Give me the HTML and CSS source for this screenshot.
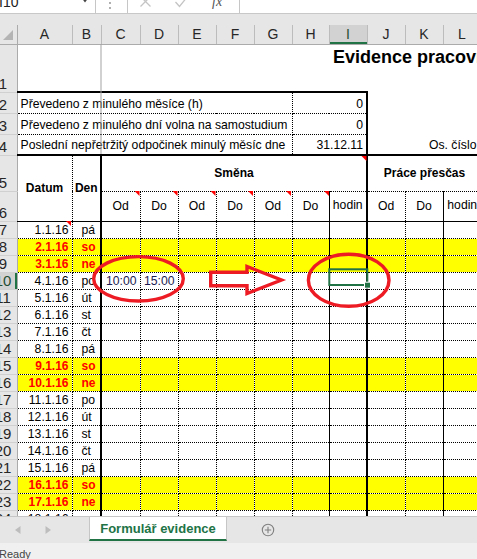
FILE: index.html
```html
<!DOCTYPE html>
<html lang="cs">
<head>
<meta charset="utf-8">
<title>Evidence pracovní doby</title>
<link rel="stylesheet" href="styles.css">
</head>
<body>
<div class="app">
  <div class="fbar">
    <div class="namebox">
      <span class="nb-text">I10</span>
      <svg class="nb-arrow" width="6" height="13" viewBox="0 0 6 13"><path d="M0 -1.5 L6 -1.5 L3 2.5 Z"/></svg>
    </div>
    <div class="fsep">
      <svg width="31" height="13" viewBox="0 0 31 13"><circle cx="14" cy="3" r="0.9"/><circle cx="14" cy="8" r="0.9"/></svg>
    </div>
    <div class="fbtns">
      <svg class="ico-x" width="11" height="13" viewBox="0 0 11 13"><path d="M0.5 -3.5 L10.5 6.5 M10.5 -3.5 L0.5 6.5"/></svg>
      <svg class="ico-ok" width="13" height="13" viewBox="0 0 13 13"><path d="M0.5 2 L4.5 6.5 L12.5 -3.5"/></svg>
      <span class="fx">fx</span>
    </div>
    <div class="finput"></div>
  </div>

  <div class="sheet">
    <div class="hgap"></div>
    <table class="grid">
      <colgroup>
        <col class="w-rh"><col class="w-a"><col class="w-b"><col class="w-c">
        <col class="w-n"><col class="w-n"><col class="w-n"><col class="w-n">
        <col class="w-h"><col class="w-n"><col class="w-n"><col class="w-n"><col class="w-n">
      </colgroup>
      <tr class="ch">
        <th class="corner"><svg width="17" height="18" viewBox="0 0 17 18"><polygon points="13,5 13,15 3,15"/></svg></th>
        <th>A</th><th>B</th><th>C</th><th>D</th><th>E</th><th>F</th><th>G</th><th>H</th><th class="sel">I</th><th>J</th><th>K</th><th>L</th>
      </tr>
      <tr class="r1">
        <th class="rh"><div class="rn">1</div></th>
        <td colspan="8"></td>
        <td colspan="4" class="title">Evidence pracovní doby</td>
      </tr>
      <tr class="r2 info first">
        <th class="rh"><div class="rn">2</div></th>
        <td colspan="7" class="lbl">Převedeno z minulého měsíce (h)</td>
        <td colspan="2" class="val">0</td>
        <td colspan="3" class="rest"></td>
      </tr>
      <tr class="r2 info">
        <th class="rh"><div class="rn">3</div></th>
        <td colspan="7" class="lbl">Převedeno z minulého dní volna na samostudium</td>
        <td colspan="2" class="val">0</td>
        <td colspan="3" class="rest"></td>
      </tr>
      <tr class="r2 info last">
        <th class="rh"><div class="rn">4</div></th>
        <td colspan="7" class="lbl">Poslední nepřetržitý odpočinek minulý měsíc dne</td>
        <td colspan="2" class="val">31.12.11</td>
        <td colspan="3" class="rest osc">Os. číslo</td>
      </tr>
      <tr class="r5">
        <th class="rh"><div class="rn">5</div></th>
        <td rowspan="2" class="hd hA">Datum</td>
        <td rowspan="2" class="hd hB">Den</td>
        <td colspan="7" class="hd hS">Směna</td>
        <td colspan="3" class="hd hP">Práce přesčas</td>
      </tr>
      <tr class="r6">
        <th class="rh"><div class="rn">6</div></th>
        <td class="sub bd">Od</td><td class="sub bd">Do</td><td class="sub bd">Od</td><td class="sub bd">Do</td>
        <td class="sub bd">Od</td><td class="sub bs">Do</td><td class="sub bt hod">hodin</td>
        <td class="sub bd">Od</td><td class="sub bs">Do</td><td class="sub hod">hodin</td>
      </tr>
      <tr class="dr"><th class="rh"><div class="rn">7</div></th><td class="dt">1.1.16</td><td class="dy">pá</td><td></td><td></td><td></td><td></td><td></td><td></td><td></td><td></td><td></td><td></td></tr>
      <tr class="dr we"><th class="rh"><div class="rn">8</div></th><td class="dt">2.1.16</td><td class="dy">so</td><td></td><td></td><td></td><td></td><td></td><td></td><td></td><td></td><td></td><td></td></tr>
      <tr class="dr we"><th class="rh"><div class="rn">9</div></th><td class="dt">3.1.16</td><td class="dy">ne</td><td></td><td></td><td></td><td></td><td></td><td></td><td></td><td></td><td></td><td></td></tr>
      <tr class="dr"><th class="rh sel"><div class="rn">10</div></th><td class="dt">4.1.16</td><td class="dy">po</td><td class="tm">10:00</td><td class="tm">15:00</td><td></td><td></td><td></td><td></td><td></td><td></td><td></td><td></td></tr>
      <tr class="dr"><th class="rh"><div class="rn">11</div></th><td class="dt">5.1.16</td><td class="dy">út</td><td></td><td></td><td></td><td></td><td></td><td></td><td></td><td></td><td></td><td></td></tr>
      <tr class="dr"><th class="rh"><div class="rn">12</div></th><td class="dt">6.1.16</td><td class="dy">st</td><td></td><td></td><td></td><td></td><td></td><td></td><td></td><td></td><td></td><td></td></tr>
      <tr class="dr"><th class="rh"><div class="rn">13</div></th><td class="dt">7.1.16</td><td class="dy">čt</td><td></td><td></td><td></td><td></td><td></td><td></td><td></td><td></td><td></td><td></td></tr>
      <tr class="dr"><th class="rh"><div class="rn">14</div></th><td class="dt">8.1.16</td><td class="dy">pá</td><td></td><td></td><td></td><td></td><td></td><td></td><td></td><td></td><td></td><td></td></tr>
      <tr class="dr we"><th class="rh"><div class="rn">15</div></th><td class="dt">9.1.16</td><td class="dy">so</td><td></td><td></td><td></td><td></td><td></td><td></td><td></td><td></td><td></td><td></td></tr>
      <tr class="dr we"><th class="rh"><div class="rn">16</div></th><td class="dt">10.1.16</td><td class="dy">ne</td><td></td><td></td><td></td><td></td><td></td><td></td><td></td><td></td><td></td><td></td></tr>
      <tr class="dr"><th class="rh"><div class="rn">17</div></th><td class="dt">11.1.16</td><td class="dy">po</td><td></td><td></td><td></td><td></td><td></td><td></td><td></td><td></td><td></td><td></td></tr>
      <tr class="dr"><th class="rh"><div class="rn">18</div></th><td class="dt">12.1.16</td><td class="dy">út</td><td></td><td></td><td></td><td></td><td></td><td></td><td></td><td></td><td></td><td></td></tr>
      <tr class="dr"><th class="rh"><div class="rn">19</div></th><td class="dt">13.1.16</td><td class="dy">st</td><td></td><td></td><td></td><td></td><td></td><td></td><td></td><td></td><td></td><td></td></tr>
      <tr class="dr"><th class="rh"><div class="rn">20</div></th><td class="dt">14.1.16</td><td class="dy">čt</td><td></td><td></td><td></td><td></td><td></td><td></td><td></td><td></td><td></td><td></td></tr>
      <tr class="dr"><th class="rh"><div class="rn">21</div></th><td class="dt">15.1.16</td><td class="dy">pá</td><td></td><td></td><td></td><td></td><td></td><td></td><td></td><td></td><td></td><td></td></tr>
      <tr class="dr we"><th class="rh"><div class="rn">22</div></th><td class="dt">16.1.16</td><td class="dy">so</td><td></td><td></td><td></td><td></td><td></td><td></td><td></td><td></td><td></td><td></td></tr>
      <tr class="dr we"><th class="rh"><div class="rn">23</div></th><td class="dt">17.1.16</td><td class="dy">ne</td><td></td><td></td><td></td><td></td><td></td><td></td><td></td><td></td><td></td><td></td></tr>
      <tr class="dr"><th class="rh"><div class="rn">24</div></th><td class="dt">18.1.16</td><td class="dy">po</td><td></td><td></td><td></td><td></td><td></td><td></td><td></td><td></td><td></td><td></td></tr>
      <tr class="dr"><th class="rh"><div class="rn">25</div></th><td class="dt">19.1.16</td><td class="dy">út</td><td></td><td></td><td></td><td></td><td></td><td></td><td></td><td></td><td></td><td></td></tr>
    </table>

    <svg class="overlay" width="477" height="502" viewBox="0 14 477 502">
      <line class="freeze" x1="101" y1="44" x2="101" y2="154"/>
      <g class="cmt">
        <polygon points="66,221 71,221 71,226"/>
        <polygon points="134.5,191 139.5,191 139.5,196"/>
        <polygon points="172.5,191 177.5,191 177.5,196"/>
        <polygon points="210.5,191 215.5,191 215.5,196"/>
        <polygon points="248,191 253,191 253,196"/>
        <polygon points="286,191 291,191 291,196"/>
        <polygon points="324,191 329,191 329,196"/>
        <polygon points="361.5,156 366.5,156 366.5,161"/>
      </g>
      <rect class="selbox" x="329.3" y="269.3" width="38" height="15.7"/>
      <rect class="fh-bg" x="364" y="281.7" width="7" height="7"/>
      <rect class="fh" x="365" y="282.7" width="5" height="5"/>
      <ellipse class="red" cx="138.5" cy="278.8" rx="44.8" ry="22.2"/>
      <ellipse class="red" cx="348.7" cy="280.3" rx="40.3" ry="26"/>
      <polygon class="red" points="210.7,272.3 247,272.3 247,266.5 281.5,280 247,293.5 247,285.7 210.7,285.7"/>
    </svg>
  </div>

  <div class="tabs">
    <div class="tabnav">
      <svg class="nav" width="6" height="8" viewBox="0 0 6 8"><path d="M5.5 0 L0 4 L5.5 8 Z"/></svg>
      <svg class="nav nav-r" width="6" height="8" viewBox="0 0 6 8"><path d="M0.5 0 L6 4 L0.5 8 Z"/></svg>
    </div>
    <div class="tab">Formulář evidence</div>
    <svg class="addsheet" width="14" height="14" viewBox="0 0 14 14"><circle cx="7" cy="7" r="5.7"/><path d="M7 3.8 V10.2 M3.8 7 H10.2"/></svg>
  </div>
  <div class="status">Ready</div>
</div>
</body>
</html>
```

FILE: styles.css
```css
* { box-sizing: border-box; }
html, body { margin: 0; padding: 0; }
body {
  width: 477px;
  height: 559px;
  overflow: hidden;
  background: #fff;
  font-family: "Liberation Sans", Arial, sans-serif;
}
.app {
  display: flex;
  flex-direction: column;
  width: 477px;
  height: 559px;
  overflow: hidden;
}

/* formula bar */
.fbar {
  flex: none;
  display: flex;
  height: 14px;
  border-bottom: 1px solid #c8c8c8;
  background: #fff;
  overflow: hidden;
}
.namebox {
  flex: none;
  width: 96px;
  display: flex;
  justify-content: space-between;
  align-items: flex-end;
  border-right: 1px solid #c6c6c6;
}
.nb-text {
  font-size: 14px;
  line-height: 14px;
  padding-bottom: 4px;
  color: #222;
  margin-left: -1px;
}
.nb-arrow { align-self: flex-start; margin-right: 7px; fill: #444; }
.fsep { flex: none; width: 31px; }
.fsep svg { display: block; fill: #8a8a8a; }
.fbtns {
  flex: none;
  width: 113px;
  display: flex;
  align-items: flex-start;
  border-left: 1px solid #c6c6c6;
  border-right: 1px solid #c6c6c6;
}
.ico-x { margin-left: 12px; fill: none; stroke: #c4c4c4; stroke-width: 1.3; }
.ico-ok { margin-left: 24px; fill: none; stroke: #c4c4c4; stroke-width: 1.3; }
.fx {
  align-self: flex-end;
  margin-left: 24px;
  font-family: "Liberation Serif", "Times New Roman", serif;
  font-style: italic;
  font-size: 14px;
  line-height: 14px;
  padding-bottom: 4px;
  color: #555;
}
.finput { flex: 1; }

/* sheet */
.sheet {
  flex: none;
  position: relative;
  height: 502px;
  overflow: hidden;
  background: #fff;
}
.hgap { height: 11px; background: #e6e6e6; }
.grid {
  border-collapse: collapse;
  table-layout: fixed;
  width: 481px;
  font-family: "Liberation Sans", Arial, sans-serif;
  font-size: 12.2px;
  color: #000;
}
.grid td, .grid th {
  padding: 0;
  overflow: hidden;
  white-space: nowrap;
}
.w-rh { width: 17px; }
.w-a { width: 55px; }
.w-b { width: 29px; }
.w-c { width: 39px; }
.w-n { width: 38px; }
.w-h { width: 37px; }

/* column headers */
.ch { height: 19px; }
.ch th {
  background: #e6e6e6;
  border-right: 1px solid #bcbcbc;
  border-bottom: 1px solid #ababab;
  font-size: 14px;
  font-weight: normal;
  line-height: 18px;
  color: #262626;
  text-align: center;
  vertical-align: middle;
}
.ch th.sel { background: #d2d2d2; box-shadow: inset 0 -2px #217346; color: #1f4e34; }
.ch th.corner { vertical-align: top; border-right-color: #ababab; }
.corner svg { display: block; fill: #b4b4b4; }

/* row headers */
.grid .rh {
  background: #e6e6e6;
  border-right: 1px solid #ababab;
  border-bottom: 1px solid #d0d0d0;
  font-weight: normal;
  font-size: 15px;
  color: #262626;
  vertical-align: bottom;
}
.grid .rh.sel { background: #d2d2d2; box-shadow: inset -2px 0 #217346; color: #1f4e34; }
.rn {
  margin-left: -11px;
  width: 28px;
  text-align: center;
  line-height: 15px;
  padding-bottom: 1px;
}

/* row 1 */
.r1 { height: 48px; }
.r1 .title {
  vertical-align: top;
  padding: 2px 0 0 4px;
  font-size: 18px;
  font-weight: bold;
  line-height: 20px;
}

/* rows 2-4 */
.r2 { height: 21px; }
.info td {
  vertical-align: bottom;
  line-height: 14px;
  padding-bottom: 2px;
}
.info .lbl {
  padding-left: 3px;
  border-right: 1px dotted #000;
  border-bottom: 1px dotted #000;
}
.info .val {
  text-align: right;
  padding-right: 3px;
  border-right: 2px solid #000;
  border-bottom: 1px dotted #000;
}
.first .lbl, .first .val { border-top: 2px solid #000; }
.last td, .last .lbl, .last .val { border-bottom: 2px solid #000; }
.info .osc { padding-left: 61px; }

/* rows 5-6 */
.r5 { height: 36px; }
.r6 { height: 30px; }
.hd {
  font-weight: bold;
  font-size: 12px;
  text-align: center;
  vertical-align: middle;
}
.hA { border-right: 1px dotted #000; border-bottom: 1px solid #000; }
.hB { border-right: 2px solid #000; border-bottom: 1px solid #000; }
.hS { border-right: 2px solid #000; border-bottom: 1px dotted #000; }
.hP { border-bottom: 1px dotted #000; }
.sub {
  text-align: center;
  vertical-align: middle;
  border-bottom: 1px solid #000;
}
.r6 .sub.hod { padding-bottom: 3px; }
.bd { border-right: 1px dotted #000; }
.bs { border-right: 1px solid #000; }
.bt { border-right: 2px solid #000; }

/* data rows */
.dr { height: 16px; }
.dr td {
  vertical-align: bottom;
  line-height: 14px;
  padding-bottom: 1px;
  border-right: 1px dotted #000;
  border-bottom: 1px dotted #000;
}
.dr td:nth-child(3) { border-right: 2px solid #000; }
.dr td:nth-child(9) { border-right: 1px solid #000; }
.dr td:nth-child(10) { border-right: 2px solid #000; }
.dr td:nth-child(12) { border-right: 1px solid #000; }
.dr .dt { text-align: right; padding-right: 3px; }
.dr .dy { text-align: left; padding-left: 9px; }
.dr .tm { text-align: right; padding-right: 3px; color: #1a1a50; }
.we td { background: #ffff00; }
.we .dt, .we .dy { color: #ff0000; font-weight: bold; font-size: 12px; }

/* overlay (annotations, selection) */
.overlay {
  position: absolute;
  left: 0;
  top: 0;
  pointer-events: none;
}
.freeze { stroke: #a3a3a3; stroke-width: 1; }
.cmt polygon { fill: #ff0000; }
.selbox { fill: none; stroke: #217346; stroke-width: 2; }
.fh-bg { fill: #fff; }
.fh { fill: #217346; }
.red { fill: none; stroke: #ed1c24; stroke-width: 3.4; stroke-linejoin: miter; }

/* sheet tabs */
.tabs {
  flex: none;
  display: flex;
  align-items: flex-start;
  height: 27px;
  border-top: 1px solid #c6c6c6;
  background: #e6e6e6;
}
.tabnav {
  flex: none;
  width: 89px;
  height: 26px;
  display: flex;
  align-items: center;
}
.nav { fill: #bdbdbd; margin-left: 15px; }
.nav-r { margin-left: 24px; }
.tab {
  flex: none;
  width: 138px;
  height: 24px;
  padding-top: 2px;
  line-height: 20px;
  background: #fff;
  border-left: 1px solid #c6c6c6;
  border-right: 1px solid #c6c6c6;
  border-bottom: 2px solid #217346;
  color: #217346;
  font-weight: bold;
  font-size: 13px;
  text-align: center;
}
.addsheet {
  flex: none;
  margin-left: 34px;
  margin-top: 6px;
  fill: none;
  stroke: #808080;
  stroke-width: 1.1;
}
.status {
  flex: none;
  height: 16px;
  background: #f0f0f0;
  font-size: 11px;
  line-height: 16px;
  padding-top: 3px;
  color: #444;
  margin-left: -1px;
  overflow: hidden;
}
```
